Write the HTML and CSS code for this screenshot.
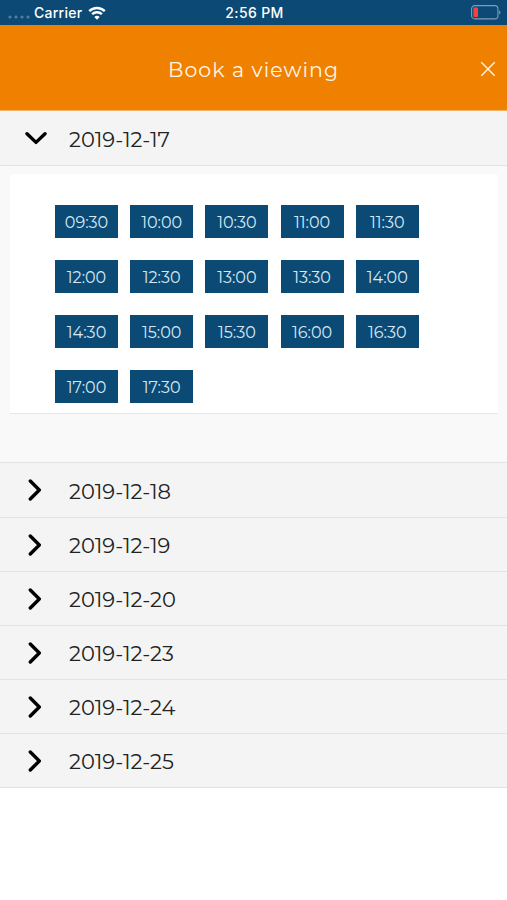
FILE: index.html
```html
<!DOCTYPE html>
<html lang="en">
<head>
  <meta charset="UTF-8" />
  <meta name="viewport" content="width=device-width, initial-scale=1.0" />
  <title>Book a viewing</title>
  <link rel="stylesheet" href="styles.css">
</head>
<body>

  <!-- STATUS BAR -->
  <div class="status-bar">
    <div class="status-left">
      <svg class="signal" viewBox="0 0 22 4"><circle cx="2" cy="2" r="1.6"/><circle cx="8" cy="2" r="1.6"/><circle cx="14" cy="2" r="1.6"/><circle cx="20" cy="2" r="1.6"/></svg>
      <span class="carrier">Carrier</span>
      <svg class="wifi" viewBox="0 0 18 14">
        <path d="M1.2 5.2a11.2 11.2 0 0 1 15.6 0M4.1 8.2a7 7 0 0 1 9.8 0"/>
        <path class="wifi-dot" d="M9 13.8L6.3 11a3.9 3.9 0 0 1 5.4 0z"/>
      </svg>
    </div>
    <span class="clock">2:56 PM</span>
    <div class="status-right">
      <svg class="battery" viewBox="0 0 30 15">
        <rect class="battery-case" x="0.6" y="0.6" width="26.3" height="13.3" rx="3.2"/>
        <rect class="battery-level" x="2.4" y="2.6" width="4.6" height="9.4" rx="1"/>
        <path class="battery-tip" d="M28.1 5.2c1.8.8 1.8 3.6 0 4.4z"/>
      </svg>
    </div>
  </div>

  <!-- HEADER -->
  <header class="header">
    <h1 class="title">Book a viewing</h1>
    <button class="close-btn" aria-label="Close">
      <svg viewBox="0 0 16 16"><path d="M1.3 1.3l13.4 13.4M14.7 1.3L1.3 14.7"/></svg>
    </button>
  </header>

  <!-- DAYS -->
  <main class="days">
    <div class="day day-open">
      <svg class="chevron" viewBox="0 0 22 22"><path d="M2 6.7L11 15.4L20 6.7"/></svg>
      <span class="date">2019-12-17</span>
    </div>
    <div class="panel">
      <div class="slots">
        <button class="slot">09:30</button>
        <button class="slot">10:00</button>
        <button class="slot">10:30</button>
        <button class="slot">11:00</button>
        <button class="slot">11:30</button>
        <button class="slot">12:00</button>
        <button class="slot">12:30</button>
        <button class="slot">13:00</button>
        <button class="slot">13:30</button>
        <button class="slot">14:00</button>
        <button class="slot">14:30</button>
        <button class="slot">15:00</button>
        <button class="slot">15:30</button>
        <button class="slot">16:00</button>
        <button class="slot">16:30</button>
        <button class="slot">17:00</button>
        <button class="slot">17:30</button>
      </div>
    </div>
    <div class="day day-first">
      <svg class="chevron" viewBox="0 0 22 22"><path d="M5.3 2L14.3 11L5.3 20"/></svg>
      <span class="date">2019-12-18</span>
    </div>
    <div class="day">
      <svg class="chevron" viewBox="0 0 22 22"><path d="M5.3 2L14.3 11L5.3 20"/></svg>
      <span class="date">2019-12-19</span>
    </div>
    <div class="day">
      <svg class="chevron" viewBox="0 0 22 22"><path d="M5.3 2L14.3 11L5.3 20"/></svg>
      <span class="date">2019-12-20</span>
    </div>
    <div class="day">
      <svg class="chevron" viewBox="0 0 22 22"><path d="M5.3 2L14.3 11L5.3 20"/></svg>
      <span class="date">2019-12-23</span>
    </div>
    <div class="day">
      <svg class="chevron" viewBox="0 0 22 22"><path d="M5.3 2L14.3 11L5.3 20"/></svg>
      <span class="date">2019-12-24</span>
    </div>
    <div class="day">
      <svg class="chevron" viewBox="0 0 22 22"><path d="M5.3 2L14.3 11L5.3 20"/></svg>
      <span class="date">2019-12-25</span>
    </div>
  </main>

</body>
</html>
```
FILE: styles.css
```css
* { margin: 0; padding: 0; box-sizing: border-box; }
html, body {
  width: 100%;
  height: 100%;
  overflow: hidden;
  background: white;
  font-family: Montserrat, Inter, sans-serif;
}

svg {
  display: block;
  fill: none;
}

button {
  border: none;
  font-family: inherit;
  cursor: pointer;
}

/* STATUS BAR */
.status-bar {
  display: grid;
  grid-template-columns: 1fr auto 1fr;
  align-items: center;
  height: 25px;
  padding: 0 6px 0 8px;
  background: #0c4a75;
  color: white;
  font-family: Inter, sans-serif;
  font-size: 14px;
  font-weight: 500;
}

.status-left {
  display: flex;
  align-items: center;
}

.signal {
  width: 22px;
  height: 4px;
  margin-top: 9px;
  fill: #527f9f;
}

.carrier {
  margin-left: 4px;
  letter-spacing: 0.25px;
}

.wifi {
  width: 18px;
  height: 14px;
  margin-left: 6px;
  stroke: white;
  stroke-width: 2.4;
}

.wifi-dot {
  fill: white;
  stroke: none;
}

.clock {
  letter-spacing: 0.35px;
}

.status-right {
  display: flex;
  justify-content: flex-end;
}

.battery {
  width: 30px;
  height: 15px;
}

.battery-case {
  stroke: #7e9db4;
  stroke-width: 1.1;
}

.battery-level {
  fill: #f9413f;
}

.battery-tip {
  fill: #7e9db4;
}

/* HEADER */
.header {
  display: grid;
  grid-template-columns: 1fr auto 1fr;
  align-items: center;
  height: 86px;
  padding: 2px 11px 0;
  border-bottom: 1px solid #f3b266;
  background: #f08000;
}

.title {
  grid-column: 2;
  padding-top: 1px;
  color: #fff6e6;
  font-size: 20.5px;
  font-weight: 400;
  letter-spacing: 1.05px;
}

.close-btn {
  justify-self: end;
  width: 16px;
  height: 16px;
  background: none;
}

.close-btn svg {
  stroke: #fff6e6;
  stroke-width: 1.4;
}

/* DAYS */
.day {
  display: flex;
  align-items: center;
  height: 54px;
  padding-left: 25px;
  border-bottom: 1px solid #e3e3e3;
  background: #f4f4f4;
}

.day-open,
.day-first {
  height: 55px;
}

.chevron {
  width: 22px;
  height: 22px;
  stroke: black;
  stroke-width: 3.4;
  stroke-linecap: round;
  stroke-linejoin: round;
}

.date {
  margin-left: 22px;
  padding-top: 2px;
  color: #222;
  font-size: 21px;
}

.day-first .date {
  padding-top: 3px;
}

.panel {
  height: 297px;
  padding: 8px 9px 0 10px;
  border-bottom: 1px solid #e3e3e3;
  background: #f9f9f9;
}

.slots {
  display: grid;
  grid-template-columns: repeat(5, 63px);
  grid-auto-rows: 33px;
  gap: 22px 12.2px;
  height: 240px;
  padding: 31px 0 0 45px;
  border-bottom: 1px solid #e6e6e6;
  border-radius: 3px 3px 0 0;
  background: white;
}

.slot {
  padding-top: 2px;
  background: #0b4a75;
  color: #d5e8f4;
  font-size: 16px;
}
```
